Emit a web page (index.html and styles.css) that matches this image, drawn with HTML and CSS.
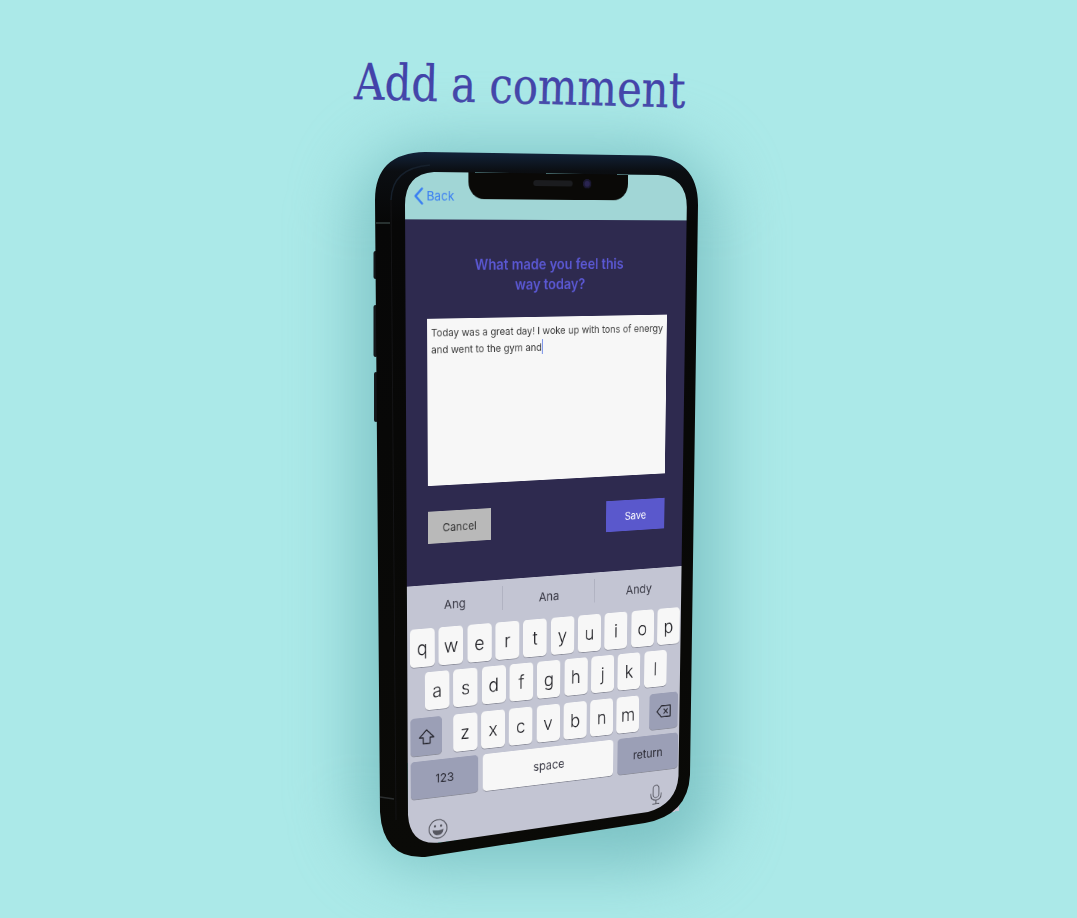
FILE: index.html
```html
<!DOCTYPE html>
<html lang="en">
<head>
  <meta charset="UTF-8">
  <meta name="viewport" content="width=device-width, initial-scale=1.0">
  <title>Add a comment</title>
  <link rel="stylesheet" href="styles.css">
</head>
<body>
  <div class="stage">
    <h1 class="page-title">Add a comment</h1>

    <div class="phone-shadow"></div>

    <div class="screen">
      <div class="notch">
        <span class="speaker"></span>
        <span class="camera"></span>
      </div>
      <div class="nav-bar">
        <svg class="back-icon" width="12" height="22" viewBox="0 0 14 24">
          <path d="M12 2 L2.5 12 L12 22" fill="none" stroke="#3b7ff2" stroke-width="3" stroke-linecap="round" stroke-linejoin="round"/>
        </svg>
        <span class="back-label">Back</span>
      </div>
      <div class="comment-form">
        <h2 class="question">What made you feel this<br>way today?</h2>
        <div class="comment-box">Today was a great day! I woke up with tons of energy and went to the gym and<span class="caret"></span></div>
        <div class="form-actions">
          <button class="btn btn-cancel">Cancel</button>
          <button class="btn btn-save">Save</button>
        </div>
      </div>
      <div class="keyboard">
        <div class="suggestions">
          <span>Ang</span>
          <span>Ana</span>
          <span>Andy</span>
        </div>
        <div class="key-row">
          <span class="key">q</span><span class="key">w</span><span class="key">e</span><span class="key">r</span><span class="key">t</span><span class="key">y</span><span class="key">u</span><span class="key">i</span><span class="key">o</span><span class="key">p</span>
        </div>
        <div class="key-row row-middle">
          <span class="key">a</span><span class="key">s</span><span class="key">d</span><span class="key">f</span><span class="key">g</span><span class="key">h</span><span class="key">j</span><span class="key">k</span><span class="key">l</span>
        </div>
        <div class="key-row row-shift">
          <span class="key key-dark key-side">
            <svg width="24" height="24" viewBox="0 0 24 24"><path d="M12 3.5 L21.5 13 H16.5 V20.5 H7.5 V13 H2.5 Z" fill="none" stroke="#26262e" stroke-width="1.5" stroke-linejoin="round"/></svg>
          </span>
          <div class="letters">
            <span class="key">z</span><span class="key">x</span><span class="key">c</span><span class="key">v</span><span class="key">b</span><span class="key">n</span><span class="key">m</span>
          </div>
          <span class="key key-dark key-side">
            <svg width="24" height="20" viewBox="0 0 26 22"><path d="M9 3 H23 V19 H9 L2 11 Z" fill="none" stroke="#26262e" stroke-width="1.5" stroke-linejoin="round"/><path d="M12.5 7.5 L19 14.5 M19 7.5 L12.5 14.5" stroke="#26262e" stroke-width="1.5"/></svg>
          </span>
        </div>
        <div class="key-row row-bottom">
          <span class="key key-dark key-num">123</span>
          <span class="key key-space">space</span>
          <span class="key key-dark key-return">return</span>
        </div>
        <div class="keyboard-foot">
          <svg width="27" height="27" viewBox="0 0 30 30">
            <circle cx="15" cy="15" r="13" fill="none" stroke="#55565f" stroke-width="1.5"/>
            <circle cx="10.5" cy="11" r="1.8" fill="#55565f"/>
            <circle cx="19.5" cy="11" r="1.8" fill="#55565f"/>
            <path d="M7 16 Q15 18.5 23 16 Q22 24 15 24 Q8 24 7 16 Z" fill="#55565f"/>
          </svg>
          <svg class="mic-icon" width="20" height="28" viewBox="0 0 24 34">
            <rect x="7" y="2" width="10" height="20" rx="5" fill="none" stroke="#55565f" stroke-width="1.5"/>
            <path d="M3 15 V17 Q3 26 12 26 Q21 26 21 17 V15 M12 26 V32 M6 32 H18" fill="none" stroke="#55565f" stroke-width="1.5"/>
          </svg>
        </div>
      </div>
    </div>

    <!-- phone body sits over the screen, with a hole cut for the display -->
    <svg class="phone-body" width="1077" height="918" viewBox="0 0 1077 918">
      <defs>
        <linearGradient id="rim" x1="0" y1="0" x2="0" y2="1">
          <stop offset="0" stop-color="#12233a"/>
          <stop offset="0.027" stop-color="#0b0e12"/>
          <stop offset="0.1" stop-color="#070707"/>
          <stop offset="1" stop-color="#0a0a07"/>
        </linearGradient>
      </defs>
      <rect x="373.5" y="251" width="4" height="28" rx="2" fill="#15171a"/>
      <rect x="373.5" y="305" width="4" height="52" rx="2" fill="#15171a"/>
      <rect x="374" y="372" width="4" height="50" rx="2" fill="#15171a"/>
      <path fill-rule="evenodd" fill="url(#rim)" d="M425 152 L650 155.5 Q698 158 698 205 L690 775 Q688 815 645 823 L425 857 Q383 859 380 812 L375 200 Q375 153 425 152 Z M434 172 L658 175 Q686.8 177 686.8 207 L678.5 776 Q676.5 804 648 812 L440 842.5 Q410 846 408 815 L405 205 Q405 174 434 172 Z"/>
      <path d="M391 200 Q392 168 430 165" fill="none" stroke="#16202c" stroke-width="1.5"/>
      <path d="M391 200 L396 820" fill="none" stroke="#141416" stroke-width="1"/>
      <path d="M376 223 L390 223" stroke="#34403f" stroke-width="1.5"/>
      <path d="M380 797 L394 799" stroke="#2c2f30" stroke-width="1.5"/>
    </svg>
  </div>
</body>
</html>
```

FILE: styles.css
```css
body {
  margin: 0;
  background-color: #abe9e8;
  font-family: Inter, "Liberation Sans", sans-serif;
}

.stage {
  position: relative;
  width: 1077px;
  height: 918px;
  overflow: hidden;
}

.page-title {
  margin: 0;
  padding: 52px 0 0 354px;
  font-family: "DejaVu Serif", serif;
  font-size: 50px;
  font-weight: 400;
  line-height: 60px;
  color: #4343a9;
  white-space: nowrap;
  -webkit-text-stroke: 0.3px #4343a9;
  transform: rotate(1.5deg) scaleX(0.835);
  transform-origin: 354px 100px;
}

/* phone */
.phone-shadow {
  position: absolute;
  left: 358px;
  top: 148px;
  width: 358px;
  height: 718px;
  border-radius: 70px;
  background: #7cc2c4;
  filter: blur(32px);
}

.phone-body {
  position: absolute;
  left: 0;
  top: 0;
}

/* flat 375x812 screen mapped on to the tilted phone */
.screen {
  position: absolute;
  left: 0;
  top: 0;
  display: flex;
  flex-direction: column;
  width: 375px;
  height: 812px;
  background: #2e2a4f;
  transform-origin: 0 0;
  transform: matrix3d(0.87651, 0.04107, 0, 0.00017322, 0.03011, 0.88353, 0, 0.00006173, 0, 0, 1, 0, 404, 171.5, 0, 1);
}

.notch {
  position: absolute;
  left: 81px;
  top: 0;
  display: flex;
  justify-content: flex-end;
  align-items: center;
  gap: 14px;
  box-sizing: border-box;
  width: 211px;
  height: 31px;
  padding: 0 50px 8px 0;
  border-radius: 0 0 20px 20px;
  background: #0a0907;
}

.speaker {
  width: 52px;
  height: 7px;
  border-radius: 4px;
  background: #1b1c1f;
}

.camera {
  width: 11px;
  height: 11px;
  border-radius: 50%;
  background: #2a2450;
  box-shadow: inset 0 0 0 2px #1a1830;
}

.nav-bar {
  display: flex;
  align-items: center;
  gap: 4px;
  box-sizing: border-box;
  height: 55px;
  padding: 0 0 0 12px;
  background: #a1d6d6;
}

.back-label {
  font-size: 15px;
  color: #3b7ff2;
}

/* form */
.comment-form {
  display: flex;
  flex-direction: column;
  flex: 1;
  padding: 41px 27px 0 28px;
}

.question {
  margin: 0 0 27px;
  font-size: 17px;
  font-weight: 600;
  line-height: 24px;
  text-align: center;
  color: #5b58d4;
}

.comment-box {
  box-sizing: border-box;
  height: 199px;
  padding: 7px 1px 7px 5px;
  font-size: 12.3px;
  line-height: 20px;
  color: #3a3a3a;
  background: #f7f7f7;
}

.caret {
  display: inline-block;
  width: 1.5px;
  height: 18px;
  vertical-align: -4px;
  background: #3c5fe0;
}

.form-actions {
  display: flex;
  justify-content: space-between;
  margin-top: 31px;
}

.btn {
  width: 82px;
  height: 39px;
  border: none;
  font-family: inherit;
  font-size: 13.5px;
}

.btn-cancel {
  background: #b9b9b9;
  color: #333333;
}

.btn-save {
  background: #5a58cc;
  color: #ffffff;
  font-size: 13px;
}

/* keyboard */
.keyboard {
  display: flex;
  flex-direction: column;
  gap: 7px;
  height: 322px;
  box-sizing: border-box;
  background: #c3c5d3;
}

.suggestions {
  display: grid;
  grid-template-columns: repeat(3, 1fr);
  height: 46px;
  font-size: 15px;
  color: #3a3a46;
}

.suggestions span {
  display: flex;
  justify-content: center;
  align-items: center;
  margin: 8px 0;
  padding-top: 5px;
  border-left: 1px solid #aeb0bf;
}

.suggestions span:first-child {
  border-left: none;
}

.key-row {
  display: flex;
  gap: 5.33px;
  height: 47px;
  padding: 0 4px;
}

.row-middle {
  padding: 0 23px;
}

.row-shift {
  justify-content: space-between;
  margin-top: 2px;
}

.letters {
  display: flex;
  gap: 5.33px;
}

.key {
  display: flex;
  justify-content: center;
  align-items: center;
  flex: none;
  width: 32px;
  height: 47px;
  border-radius: 5px;
  font-size: 23px;
  font-weight: 300;
  color: #1d1d22;
  background: #f7f7f7;
  box-shadow: 0 1px 0 #8d8f9c;
}

.key-dark {
  background: #9b9fb6;
  color: #2c2c36;
  font-weight: 400;
}

.key-side {
  width: 41px;
}

.row-bottom {
  gap: 6px;
}

.key-num,
.key-space,
.key-return {
  font-size: 15px;
  font-weight: 400;
}

.key-num {
  width: 89px;
}

.key-space {
  width: 180px;
  color: #3a3a46;
}

.key-return {
  width: 87px;
}

.keyboard-foot {
  display: flex;
  justify-content: space-between;
  align-items: flex-end;
  flex: 1;
  padding: 0 24px 4px 26px;
}

.mic-icon {
  margin-bottom: 8px;
}
```
